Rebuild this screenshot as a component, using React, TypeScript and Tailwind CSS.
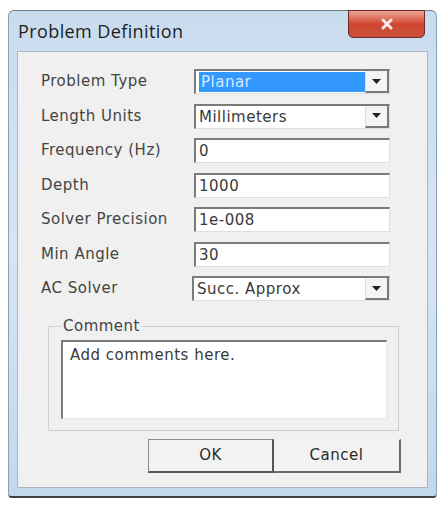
import React from 'react';

const font = { fontFamily: '"DejaVu Sans", Verdana, sans-serif' };

interface FieldProps {
  label: string;
  value: string;
  combo?: boolean;
  selected?: boolean;
  wide?: boolean;
}

const Arrow = () => (
  <div className="w-[24px] h-full flex items-center justify-center bg-[#f4f4f4] border-r-2 border-b-2 border-[#7a7a7a] border-l border-l-[#dcdcdc]">
    <svg width="9" height="5" viewBox="0 0 9 5">
      <path d="M0 0h9L4.5 5z" fill="#222" />
    </svg>
  </div>
);

const Field: React.FC<FieldProps> = ({ label, value, combo, selected, wide }) => (
  <div className="flex items-center h-[25px]">
    <span className="w-[153px] text-[15px] text-[#444] tracking-[0.5px] whitespace-nowrap">{label}</span>
    <div
      className={`flex items-stretch h-[25px] ${wide ? 'w-[198px] -ml-[2px]' : 'w-[196px]'} bg-white border-t-2 border-l-2 border-[#7b7b7b] border-r border-b border-r-[#dedede] border-b-[#dedede]`}
    >
      <div className="flex-1 flex items-center pl-[3px]">
        <span
          className={`text-[15px] leading-[20px] tracking-[0.5px] whitespace-nowrap ${selected ? 'w-full h-[20px] bg-[#3399ff] text-[#dbe9ff] pl-[2px]' : 'text-[#3a3a3a]'}`}
        >
          {value}
        </span>
      </div>
      {combo && <Arrow />}
    </div>
  </div>
);

export default function App() {
  return (
    <div className="w-[441px] h-[523px] bg-white pt-[10px] pl-[8px]" style={font}>
      {/* window frame */}
      <div className="w-[429px] h-[488px] rounded-t-[6px] rounded-b-[4px] bg-gradient-to-b from-[#c9dcee] via-[#d6e5f3] to-[#c3d8ec] border-t border-t-[#6f7a86] border-l border-r border-[#8aa0b4] border-b-2 border-b-[#3d4248] flex flex-col relative">
        {/* title bar */}
        <div className="h-[40px] flex items-center pl-[9px] relative">
          <span className="text-[18px] text-[#1e1e1e] tracking-[0.4px]" style={{ fontFamily: '"Open Sans", "Noto Sans", sans-serif' }}>
            Problem Definition
          </span>
          <div className="absolute right-[11px] -top-[1px] w-[77px] h-[28px] rounded-b-[5px] border border-[#6d2a24] bg-gradient-to-b from-[#e8a496] via-[#d2452f] to-[#c9503a] flex items-center justify-center">
            <svg width="14" height="12" viewBox="0 0 14 12">
              <path d="M3 2l8 8M11 2L3 10" stroke="#f4ece8" strokeWidth="3" strokeLinecap="round" />
            </svg>
          </div>
        </div>
        {/* client area */}
        <div className="mx-[8px] mb-[8px] flex-1 bg-[#f0f0f0] border border-[#a9b7c4] flex flex-col">
          <div className="pl-[23px] pt-[17px] flex flex-col gap-[9.5px]">
            <Field label="Problem Type" value="Planar" combo selected />
            <Field label="Length Units" value="Millimeters" combo />
            <Field label="Frequency (Hz)" value="0" />
            <Field label="Depth" value="1000" />
            <Field label="Solver Precision" value="1e-008" />
            <Field label="Min Angle" value="30" />
            <Field label="AC Solver" value="Succ. Approx" combo wide />
          </div>

          {/* comment group */}
          <div className="ml-[30px] mt-[25px] w-[351px] h-[105px] border border-[#cfcfcf] relative pt-[13px] pl-[12px]">
            <span className="absolute left-[12px] -top-[9px] bg-[#f0f0f0] px-[2px] text-[15px] tracking-[0.5px] text-[#444] leading-[16px]">
              Comment
            </span>
            <div className="w-[326px] h-[79px] bg-white border-t-2 border-l-2 border-[#7b7b7b] border-r border-b border-r-[#e6e6e6] border-b-[#e6e6e6] pl-[7px] pt-[2px] text-[15px] tracking-[0.5px] text-[#3a3a3a]">
              Add comments here.
            </div>
          </div>

          {/* buttons */}
          <div className="flex ml-[130px] mt-[8px]">
            <button className="w-[126px] h-[34px] bg-[#f2f2f2] border border-[#8a8a8a] border-r-2 border-b-2 border-r-[#555] border-b-[#555] text-[15px] tracking-[0.5px] text-[#2a2a2a]">
              OK
            </button>
            <button className="w-[127px] h-[34px] bg-[#f2f2f2] border-t border-t-[#f2f2f2] border-l-0 border-r-2 border-b-2 border-r-[#6a6a6a] border-b-[#6a6a6a] text-[15px] tracking-[0.5px] text-[#2a2a2a]">
              Cancel
            </button>
          </div>
        </div>
      </div>
    </div>
  );
}
